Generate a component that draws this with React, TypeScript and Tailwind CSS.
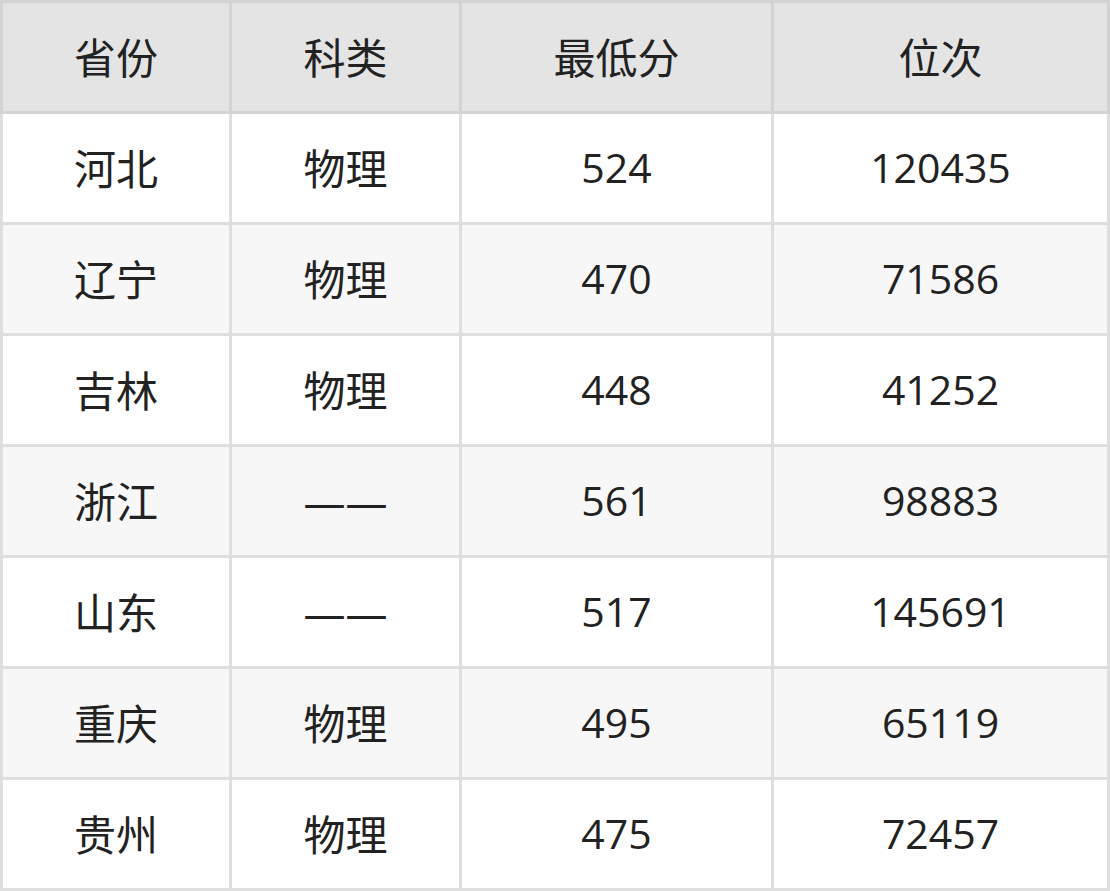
const headers = ['省份', '科类', '最低分', '位次'];

const rows: string[][] = [
  ['河北', '物理', '524', '120435'],
  ['辽宁', '物理', '470', '71586'],
  ['吉林', '物理', '448', '41252'],
  ['浙江', '——', '561', '98883'],
  ['山东', '——', '517', '145691'],
  ['重庆', '物理', '495', '65119'],
  ['贵州', '物理', '475', '72457'],
];

const cols = 'grid grid-cols-[226px_227px_309px_333px] gap-[3px]';
const font = { fontFamily: '"Open Sans", "Noto Sans CJK SC", sans-serif' };

export default function App() {
  return (
    <div className="w-[1110px] h-[891px] bg-white text-[#222] text-[42px]" style={font}>
      <div className={`${cols} bg-[#d3d3d3] p-[3px]`}>
        {headers.map((h) => (
          <div key={h} className="h-[108px] flex items-center justify-center bg-[#e4e4e4]">
            {h}
          </div>
        ))}
      </div>
      <div className={`${cols} bg-[#dedede] px-[3px] pb-[3px]`}>
        {rows.map((r, i) =>
          r.map((c, j) => (
            <div
              key={`${i}-${j}`}
              className={`h-[108px] flex items-center justify-center ${j > 1 ? 'text-[41px]' : ''} ${
                i % 2 === 0 ? 'bg-white' : 'bg-[#f7f7f7]'
              }`}
            >
              {c}
            </div>
          ))
        )}
      </div>
    </div>
  );
}
